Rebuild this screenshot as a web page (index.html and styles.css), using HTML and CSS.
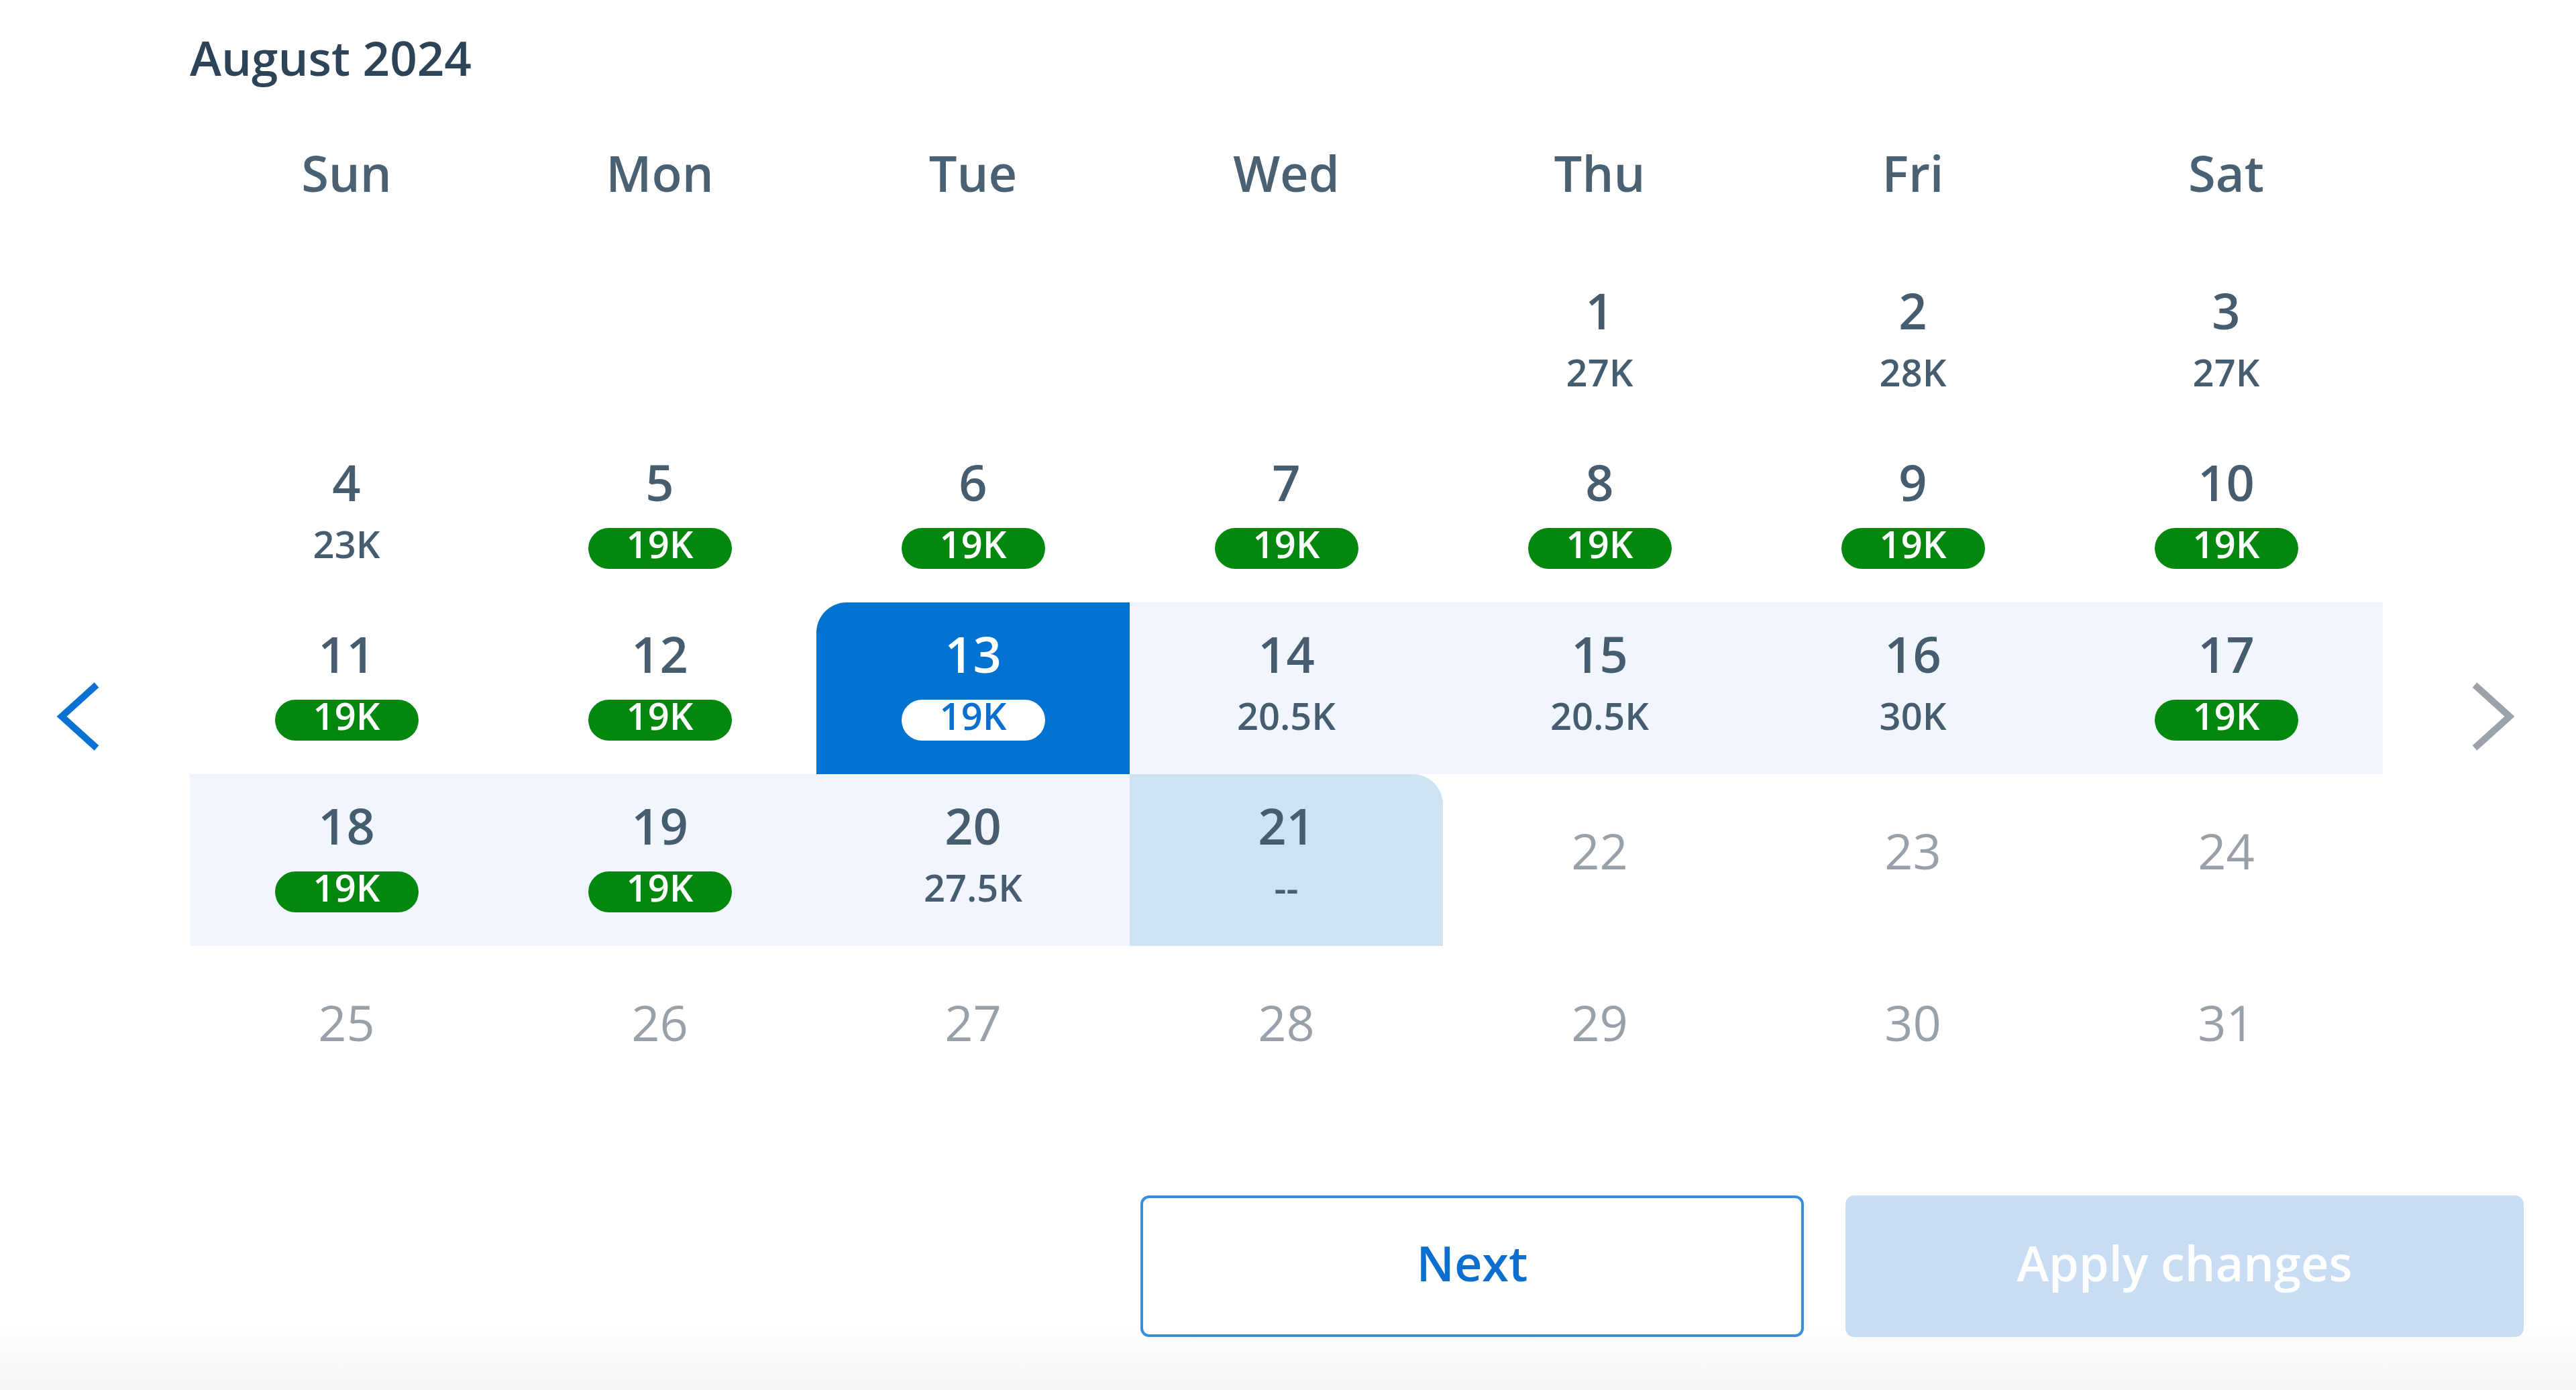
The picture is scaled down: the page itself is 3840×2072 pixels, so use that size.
FILE: index.html
```html
<!DOCTYPE html>
<html lang="en">
<head>
  <meta charset="UTF-8">
  <meta name="viewport" content="width=device-width, initial-scale=1.0">
  <title>Select dates</title>
  <link rel="stylesheet" href="styles.css">
</head>
<body>
  <main class="picker">
    <div class="picker-body">
      <button class="nav nav-prev" aria-label="Previous month">
        <svg width="66" height="106" viewBox="0 0 66 106">
          <polyline points="60,6 8,53 60,100" fill="none" stroke="#0b72d3" stroke-width="10" stroke-linejoin="miter"/>
        </svg>
      </button>

      <section class="month">
        <h2 class="month-title">August 2024</h2>

        <div class="weekdays">
          <span>Sun</span>
          <span>Mon</span>
          <span>Tue</span>
          <span>Wed</span>
          <span>Thu</span>
          <span>Fri</span>
          <span>Sat</span>
        </div>

        <div class="days">
          <div class="day empty"></div>
          <div class="day empty"></div>
          <div class="day empty"></div>
          <div class="day empty"></div>
          <div class="day"><span class="num">1</span><span class="price">27K</span></div>
          <div class="day"><span class="num">2</span><span class="price">28K</span></div>
          <div class="day"><span class="num">3</span><span class="price">27K</span></div>

          <div class="day"><span class="num">4</span><span class="price">23K</span></div>
          <div class="day"><span class="num">5</span><span class="price deal">19K</span></div>
          <div class="day"><span class="num">6</span><span class="price deal">19K</span></div>
          <div class="day"><span class="num">7</span><span class="price deal">19K</span></div>
          <div class="day"><span class="num">8</span><span class="price deal">19K</span></div>
          <div class="day"><span class="num">9</span><span class="price deal">19K</span></div>
          <div class="day"><span class="num">10</span><span class="price deal">19K</span></div>

          <div class="day"><span class="num">11</span><span class="price deal">19K</span></div>
          <div class="day"><span class="num">12</span><span class="price deal">19K</span></div>
          <div class="day selected"><span class="num">13</span><span class="price deal">19K</span></div>
          <div class="day in-range"><span class="num">14</span><span class="price">20.5K</span></div>
          <div class="day in-range"><span class="num">15</span><span class="price">20.5K</span></div>
          <div class="day in-range"><span class="num">16</span><span class="price">30K</span></div>
          <div class="day in-range"><span class="num">17</span><span class="price deal">19K</span></div>

          <div class="day in-range"><span class="num">18</span><span class="price deal">19K</span></div>
          <div class="day in-range"><span class="num">19</span><span class="price deal">19K</span></div>
          <div class="day in-range"><span class="num">20</span><span class="price">27.5K</span></div>
          <div class="day range-end"><span class="num">21</span><span class="price">--</span></div>
          <div class="day disabled"><span class="num">22</span></div>
          <div class="day disabled"><span class="num">23</span></div>
          <div class="day disabled"><span class="num">24</span></div>

          <div class="day disabled"><span class="num">25</span></div>
          <div class="day disabled"><span class="num">26</span></div>
          <div class="day disabled"><span class="num">27</span></div>
          <div class="day disabled"><span class="num">28</span></div>
          <div class="day disabled"><span class="num">29</span></div>
          <div class="day disabled"><span class="num">30</span></div>
          <div class="day disabled"><span class="num">31</span></div>
        </div>
      </section>

      <button class="nav nav-next" aria-label="Next month">
        <svg width="66" height="106" viewBox="0 0 66 106">
          <polyline points="6,6 58,53 6,100" fill="none" stroke="#9ba2a9" stroke-width="10" stroke-linejoin="miter"/>
        </svg>
      </button>
    </div>

    <div class="actions">
      <button class="btn btn-outline">Next</button>
      <button class="btn btn-disabled" disabled>Apply changes</button>
    </div>
  </main>
</body>
</html>
```

FILE: styles.css
```css
html, body {
  margin: 0;
  height: 2072px;
  overflow: hidden;
}
body {
  font-family: "Open Sans", Arial, sans-serif;
  font-stretch: 92%;
  color: #465d70;
  background: linear-gradient(to bottom, #ffffff 1975px, #f4f4f4 2072px);
}
.picker-body {
  display: flex;
  align-items: flex-start;
}
.nav {
  display: flex;
  padding: 1015px 0 0;
  border: none;
  background: none;
  cursor: pointer;
}
.nav-prev {
  width: 283px;
  padding-left: 84px;
}
.nav-next {
  width: 288px;
  padding-left: 131px;
}
.month {
  width: 3269px;
}
.month-title {
  margin: 43px 0 0;
  font-size: 71px;
  line-height: 86px;
  font-weight: 600;
  color: #2c4358;
}
.weekdays,
.days {
  display: grid;
  grid-template-columns: repeat(7, 467px);
}
.weekdays {
  margin-top: 92px;
  padding-bottom: 91px;
  font-size: 74px;
  line-height: 74px;
  font-weight: 550;
  color: #4a6173;
  text-align: center;
}
.days {
  grid-auto-rows: 256px;
}
.day {
  display: flex;
  flex-direction: column;
  align-items: center;
  padding-top: 40px;
  box-sizing: border-box;
}
.num {
  font-size: 74px;
  line-height: 74px;
  font-weight: 600;
}
.price {
  margin-top: 31px;
  height: 61px;
  padding-bottom: 14px;
  box-sizing: border-box;
  font-size: 56px;
  line-height: 47px;
  font-weight: 550;
}
.price.deal {
  width: 214px;
  border-radius: 31px;
  background-color: #04870f;
  color: #fff;
  text-align: center;
  font-weight: 600;
}
.day.disabled {
  padding-top: 77px;
  color: #98a1aa;
}
.day.disabled .num {
  font-weight: 500;
}
.day.in-range {
  background-color: #f1f6fe;
}
.day.selected {
  background-color: #0073d1;
  color: #fff;
  border-top-left-radius: 45px;
}
.day.selected .price.deal {
  background-color: #fff;
  color: #0b6fd0;
  font-weight: 550;
}
.day.range-end {
  background-color: #cde3f4;
  border-top-right-radius: 45px;
}
.actions {
  display: flex;
  justify-content: flex-end;
  gap: 62px;
  margin-top: 116px;
  padding-right: 78px;
}
.btn {
  height: 211px;
  padding: 0 0 12px;
  border-radius: 13px;
  font-family: inherit;
  font-stretch: inherit;
  font-size: 72px;
  font-weight: 600;
  cursor: pointer;
}
.btn-outline {
  width: 989px;
  background-color: #fff;
  border: 4px solid #3a8cdd;
  color: #0b6fd0;
}
.btn-disabled {
  width: 1011px;
  background-color: #c8ddf3;
  border: none;
  color: #fff;
  cursor: default;
}
```
